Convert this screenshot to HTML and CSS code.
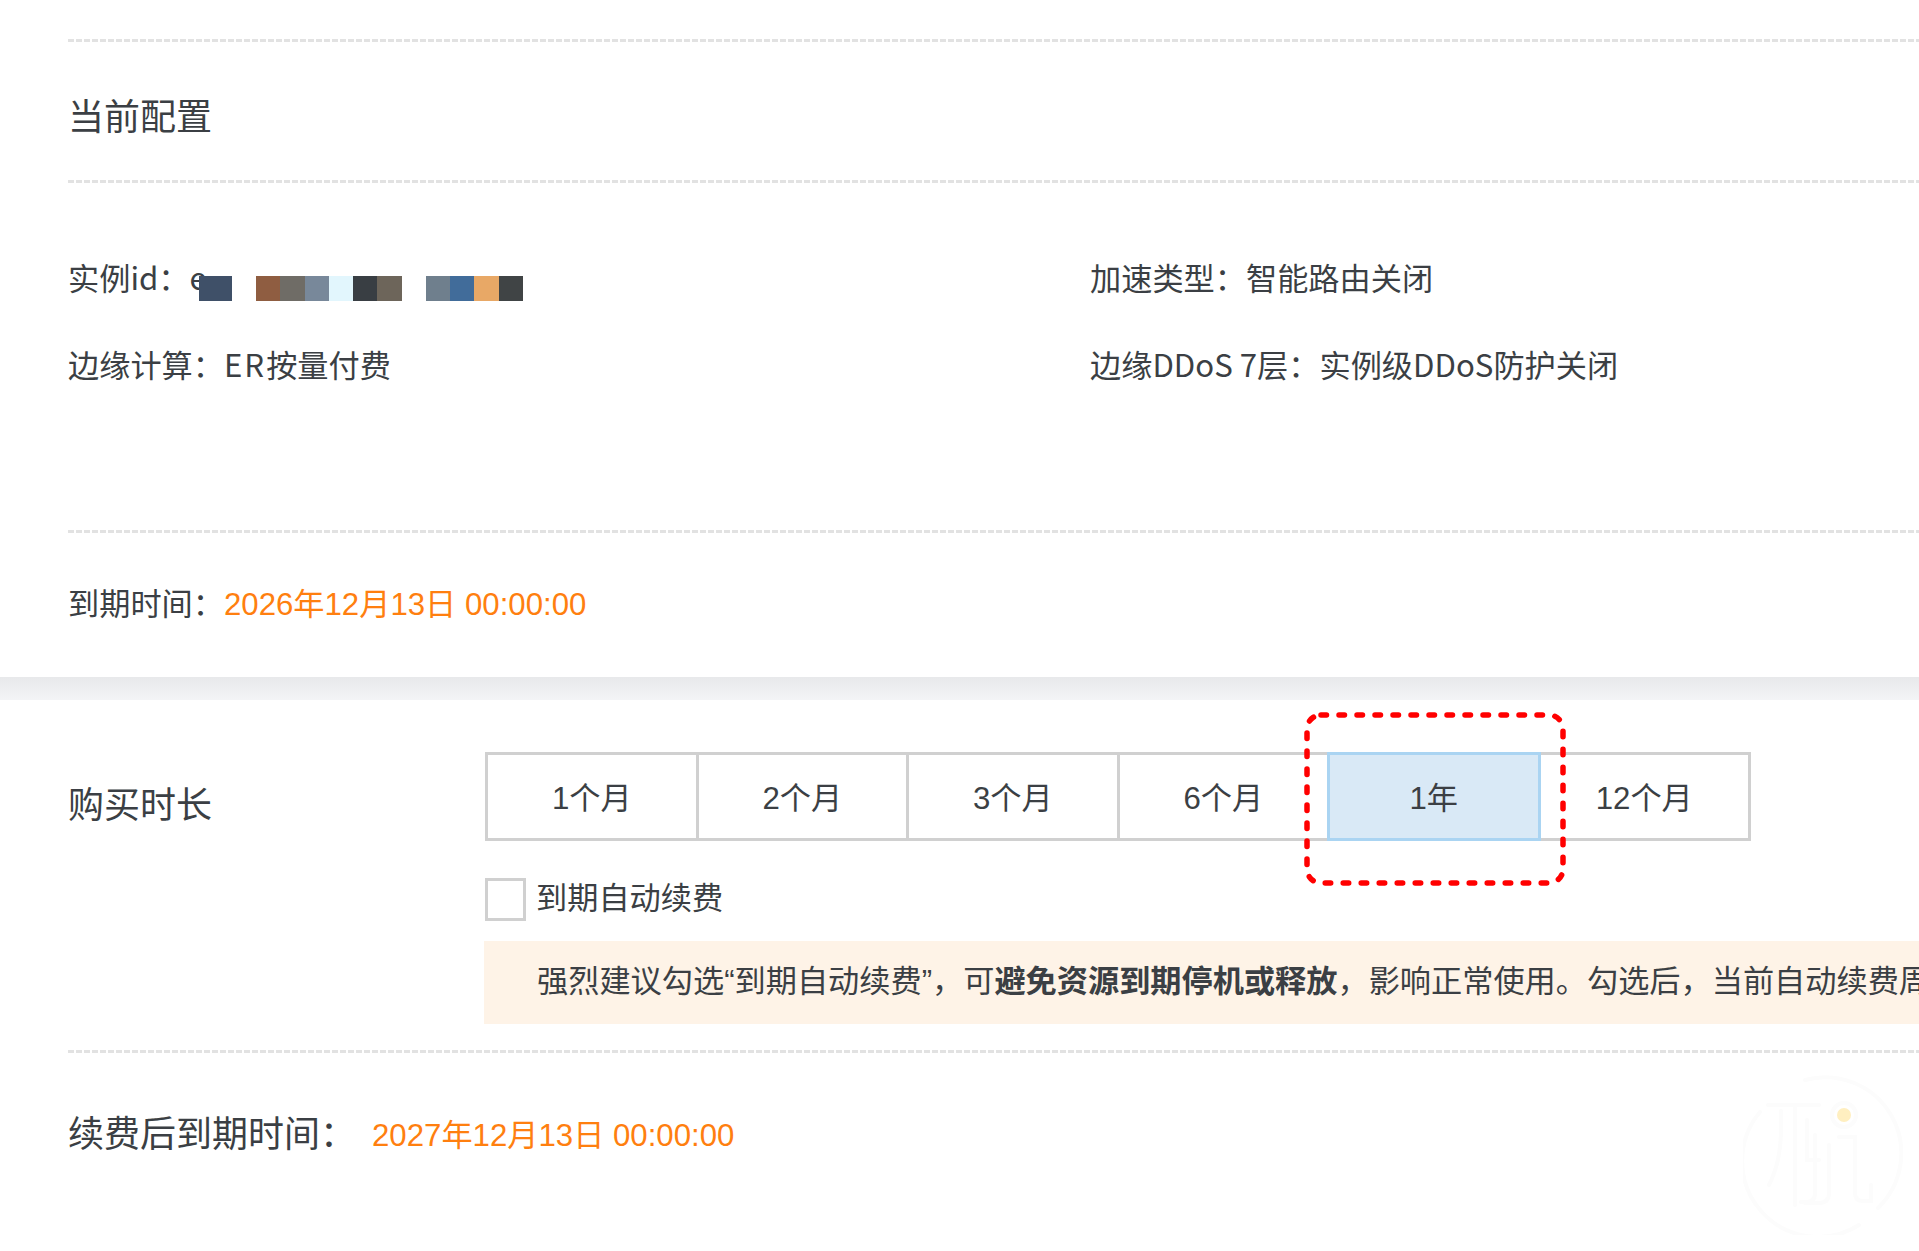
FILE: index.html
```html
<!DOCTYPE html>
<html lang="zh-CN">
<head>
  <meta charset="UTF-8">
  <meta name="viewport" content="width=device-width, initial-scale=1.0">
  <title>续费</title>
  <link rel="stylesheet" href="styles.css">
</head>
<body>

  <!-- Current config -->
  <div class="config">
    <div class="dash-line"></div>
    <h2 class="config-title">当前配置</h2>
    <div class="dash-line"></div>

    <div class="info-grid">
      <div class="info-item instance">
        实例id：e
        <div class="mosaic">
          <span class="m-block w33" style="background: #3f5068"></span>
          <span class="m-gap"></span>
          <span class="m-block" style="background: #8f5d41"></span>
          <span class="m-block" style="background: #6f6c66"></span>
          <span class="m-block" style="background: #78889a"></span>
          <span class="m-block" style="background: #e2f6fd"></span>
          <span class="m-block" style="background: #393e43"></span>
          <span class="m-block" style="background: #6d655a"></span>
          <span class="m-gap"></span>
          <span class="m-block" style="background: #6f7f8d"></span>
          <span class="m-block" style="background: #416c9a"></span>
          <span class="m-block" style="background: #e8a866"></span>
          <span class="m-block" style="background: #404445"></span>
        </div>
      </div>
      <div class="info-item">加速类型：智能路由关闭</div>
      <div class="info-item">边缘计算：<span class="latin">ER</span>按量付费</div>
      <div class="info-item">边缘DDoS 7层：实例级DDoS防护关闭</div>
    </div>

    <div class="dash-line"></div>
    <div class="expire">到期时间：<span class="orange">2026年12月13日 00:00:00</span></div>
  </div>

  <div class="band"></div>

  <!-- Buy duration -->
  <div class="buy">
    <div class="buy-label">购买时长</div>
    <div class="buy-main">
      <div class="durations">
        <div class="dur">1个月</div>
        <div class="dur">2个月</div>
        <div class="dur">3个月</div>
        <div class="dur">6个月</div>
        <div class="dur active">1年</div>
        <div class="dur">12个月</div>
        <svg class="red-mark" width="262" height="174" viewBox="0 0 262 174">
          <rect x="3" y="3" width="256" height="168" rx="14" fill="none" stroke="#f00" stroke-width="5.5" stroke-linecap="round" stroke-dasharray="5.5 12.5"/>
        </svg>
      </div>
      <label class="auto-renew"><span class="check"></span>到期自动续费</label>
      <div class="tip">强烈建议勾选“到期自动续费”，可<b>避免资源到期停机或释放</b>，影响正常使用。勾选后，当前自动续费周期</div>
    </div>
  </div>

  <div class="after">
    <div class="dash-line"></div>
    <div class="after-row">
      <span class="after-label">续费后到期时间：</span>
      <span class="orange after-date">2027年12月13日 00:00:00</span>
    </div>
  </div>

  <!-- Watermark -->
  <svg class="watermark" width="160" height="160" viewBox="0 0 160 160" fill="none" stroke="#fcfcfc" stroke-width="4" stroke-linecap="round">
    <path d="M62 5 A76 76 0 0 1 135 133"/>
    <path d="M116 150 A76 76 0 0 1 17 37"/>
    <path d="M25 30 H76"/>
    <path d="M38 36 C39 70 36 90 26 110"/>
    <path d="M52 32 V130"/>
    <path d="M64 45 V85 H76"/>
    <path d="M72 60 V118 Q72 127 64 127 H58"/>
    <path d="M86 70 V118 Q86 128 76 128 H62"/>
    <path d="M96 62 H112 V118 Q112 126 120 126 H128 V110"/>
    <circle cx="101" cy="40" r="12"/>
    <circle class="wm-dot" cx="101" cy="40" r="7"/>
  </svg>

</body>
</html>
```

FILE: styles.css
```css
html,
body {
  margin: 0;
  padding: 0;
  height: 100%;
  overflow: hidden;
}

body {
  position: relative;
  background: #fff;
  color: #3b3f44;
  font-family: "Liberation Sans", "Noto Sans CJK SC", sans-serif;
  font-size: 31.2px;
  width: 1919px;
  height: 1251px;
}

.dash-line {
  height: 3px;
  background: repeating-linear-gradient(90deg, #e2e2e2 0 6px, transparent 6px 8px);
}

.orange {
  color: #ff7f0f;
}

.config {
  padding: 39px 0 0 68px;
}

.config-title {
  margin: 0;
  height: 138px;
  line-height: 152px;
  font-size: 36px;
  font-weight: normal;
}

.info-grid {
  display: grid;
  grid-template-columns: 1022px 1fr;
  grid-auto-rows: 87px;
  padding: 50px 0 123px;
  line-height: 87px;
  font-family: "Noto Sans CJK SC", sans-serif;
}

.info-item {
  white-space: nowrap;
}

.latin {
  letter-spacing: 2px;
}

.instance {
  position: relative;
}

.mosaic {
  position: absolute;
  left: 131px;
  top: 43px;
  display: flex;
  height: 25px;
}

.m-block {
  width: 24.3px;
}

.m-block.w33 {
  width: 33px;
}

.m-gap {
  width: 24px;
}

.expire {
  height: 144px;
  line-height: 143px;
}

.band {
  height: 23px;
  background: linear-gradient(#e8e9eb, #f3f4f6);
}

.buy {
  display: flex;
  padding-top: 52px;
}

.buy-label {
  width: 416px;
  padding-left: 68px;
  line-height: 107px;
  font-size: 36px;
}

.buy-main {
  flex: 1;
  min-width: 0;
  padding-left: 1px;
}

.durations {
  position: relative;
  display: flex;
  width: 1266px;
}

.dur {
  flex: 1;
  height: 83px;
  line-height: 88px;
  margin-left: -3px;
  border: 3px solid #d0d0d0;
  text-align: center;
}

.dur:first-child {
  margin-left: 0;
}

.dur.active {
  position: relative;
  border-color: #aad4f2;
  background: #d9e9f6;
}

/* red marker drawn over the screenshot */
.red-mark {
  position: absolute;
  left: 819px;
  top: -40px;
}

.auto-renew {
  display: flex;
  align-items: center;
  margin-top: 35px;
  line-height: 42px;
}

.check {
  width: 35px;
  height: 37px;
  margin: 2px 10px 0 0;
  border: 3px solid #d0d0d0;
}

.tip {
  margin: 20px 0 0 -1px;
  height: 83px;
  line-height: 81px;
  padding-left: 53px;
  background: #fef3e7;
  white-space: nowrap;
  overflow: hidden;
}

.after {
  margin-top: 26px;
  padding-left: 68px;
}

.after-row {
  display: flex;
  align-items: center;
  height: 155px;
}

.after-label {
  width: 304px;
  font-size: 36px;
}

.after-date {
  margin-top: 3px;
}

.watermark {
  position: absolute;
  left: 1743px;
  top: 1075px;
}

.wm-dot {
  fill: #ffefc0;
  stroke: none;
}
```
